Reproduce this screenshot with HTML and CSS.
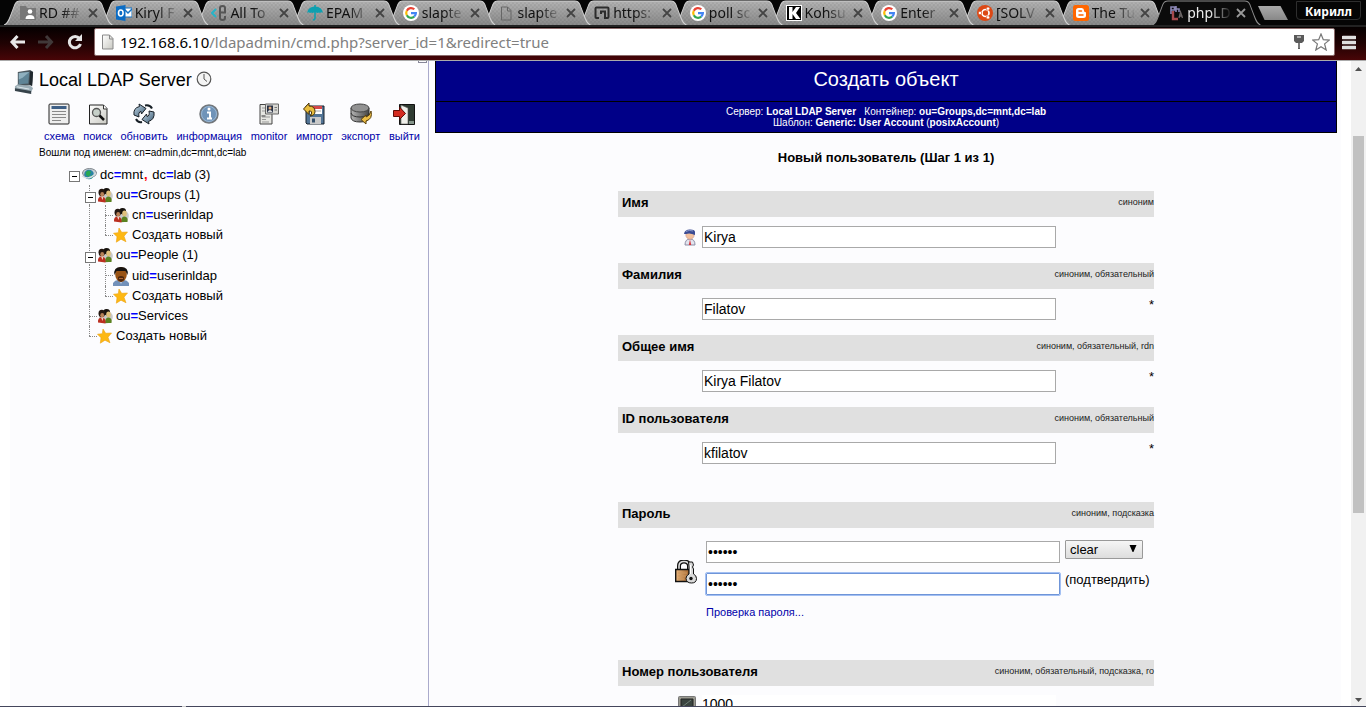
FILE: index.html
```html
<!DOCTYPE html>
<html lang="ru">
<head>
<meta charset="utf-8">
<title>phpLDAPadmin</title>
<link rel="stylesheet" href="styles.css">
</head>
<body>
<svg class="defs" aria-hidden="true">
  <defs>
    <linearGradient id="tabfill" x1="0" y1="0" x2="0" y2="1"><stop offset="0" stop-color="#b4b4b4"/><stop offset="1" stop-color="#8a8a8a"/></linearGradient>
    <linearGradient id="steel" x1="0" y1="0" x2="1" y2="1"><stop offset="0" stop-color="#c8dcea"/><stop offset="1" stop-color="#35556f"/></linearGradient>
    <linearGradient id="paper" x1="0" y1="0" x2="1" y2="1"><stop offset="0" stop-color="#ffffff"/><stop offset="1" stop-color="#c9c9c2"/></linearGradient>
    <linearGradient id="metal" x1="0" y1="0" x2="1" y2="0"><stop offset="0" stop-color="#b5b5b5"/><stop offset="1" stop-color="#444444"/></linearGradient>
    <linearGradient id="brass" x1="0" y1="0" x2="1" y2="0"><stop offset="0" stop-color="#e8b47c"/><stop offset="1" stop-color="#a5672e"/></linearGradient>
    <pattern id="weave" width="4" height="4" patternUnits="userSpaceOnUse"><path d="M0 0h2v2h-2zM2 2h2v2h-2z" fill="#000" opacity=".07"/></pattern>
  </defs>
  <symbol id="shape" viewBox="0 0 109 24" preserveAspectRatio="none">
    <path d="M0 24C4 23 5 19 7 14L11 4Q12.500 1 16 1H93Q96.500 1 98 4L102 14C104 19 105 23 109 24Z" fill="url(#tabfill)"/>
    <path d="M0 24C4 23 5 19 7 14L11 4Q12.500 1 16 1H93Q96.500 1 98 4L102 14C104 19 105 23 109 24Z" fill="url(#weave)"/>
    <path d="M0 24C4 23 5 19 7 14L11 4Q12.500 1 16 1H93Q96.500 1 98 4L102 14C104 19 105 23 109 24" fill="none" stroke="#d0d0d0" stroke-width="1"/>
  </symbol>
  <symbol id="shape-on" viewBox="0 0 109 24" preserveAspectRatio="none">
    <path d="M0 24C4 23 5 19 7 14L11 4Q12.500 1 16 1H93Q96.500 1 98 4L102 14C104 19 105 23 109 24" fill="#0b0b0b" stroke="#8c8c8c"/>
  </symbol>
  <symbol id="x" viewBox="0 0 10 10"><path d="M1 1L9 9M9 1L1 9" stroke="currentColor" stroke-width="1.800"/></symbol>
  <symbol id="g" viewBox="0 0 16 16"><circle cx="8" cy="8" r="8" fill="#fff"/><g fill="none" stroke-width="2.200"><path d="M11.300 4.300A4.800 4.800 0 0 0 3.800 5.700" stroke="#ea4335"/><path d="M3.800 5.700A4.800 4.800 0 0 0 3.800 10.300" stroke="#fbbc05"/><path d="M3.800 10.300A4.800 4.800 0 0 0 11.200 11.700" stroke="#34a853"/><path d="M11.200 11.700A4.800 4.800 0 0 0 12.900 8.100H8" stroke="#4285f4"/></g></symbol>
  <symbol id="group" viewBox="0 0 16 16"><ellipse cx="9" cy="9" rx="6.800" ry="6.500" fill="#c9c9c9"/><path d="M6 6Q5.500 1 9.500 1T13 5L11 8z" fill="#17120e"/><ellipse cx="11.500" cy="6.500" rx="2.300" ry="3" fill="#dfc07c"/><path d="M8 15Q8 9.500 11.500 9.500Q15.500 10 14.500 15Z" fill="#5a8220"/><ellipse cx="4.800" cy="5.500" rx="3.300" ry="3.700" fill="#241812"/><ellipse cx="5.200" cy="7.200" rx="1.900" ry="2.200" fill="#b98257"/><path d="M1 14.500Q.500 9.500 5 9.500Q9 10 8.500 15.500Z" fill="#bb2f20"/><path d="M4 9.500l1.500 3.500 1-3.500" fill="#ecd5c0"/></symbol>
  <symbol id="star" viewBox="0 0 16 16"><path d="M6 1L8.700 5.300 14.500 5 11 9.200 13 14.800 8 12.200 3.300 15.200 4 9.800.500 6.200 5.300 5.700Z" fill="#fdb813" stroke="#eda316" stroke-width=".600"/></symbol>
</svg>

<header class="chrome">
  <div class="tabstrip">
    <nav class="tabs" aria-label="Вкладки">
      <div class="tab"><svg class="tab-shape"><use href="#shape"/></svg><svg class="fav" viewBox="0 0 16 16"><path d="M0 1h6l1 2h9v12H0z" fill="#777"/><circle cx="10" cy="6.500" r="2.300" fill="#fff"/><path d="M5.500 14q0-4 4.500-4t4.500 4z" fill="#fff"/></svg><span class="tab-name">RD ##</span><button class="close" aria-label="Закрыть"><svg><use href="#x"/></svg></button></div>
      <div class="tab"><svg class="tab-shape"><use href="#shape"/></svg><svg class="fav" viewBox="0 0 16 16"><path d="M8 3h8v9H8z" fill="#fff" stroke="#1472c4"/><path d="M8 4l4 4 4-4" fill="none" stroke="#1472c4" stroke-width="1.500"/><path d="M0 1.500L9.500 0v16L0 14.500z" fill="#0b6cc4"/><ellipse cx="4.800" cy="8" rx="2.300" ry="3" fill="none" stroke="#fff" stroke-width="1.600"/></svg><span class="tab-name">Kiryl F</span><button class="close" aria-label="Закрыть"><svg><use href="#x"/></svg></button></div>
      <div class="tab"><svg class="tab-shape"><use href="#shape"/></svg><svg class="fav" viewBox="0 0 16 16"><path d="M5 4L1 8l4 4" fill="none" stroke="#26b4c8" stroke-width="2"/><path d="M9 7.500h5V3q0-2-2.500-2T9 3v10q0 2 2.500 2t2.500-2v-2" fill="none" stroke="#555" stroke-width="2"/></svg><span class="tab-name">All To</span><button class="close" aria-label="Закрыть"><svg><use href="#x"/></svg></button></div>
      <div class="tab"><svg class="tab-shape"><use href="#shape"/></svg><svg class="fav" viewBox="0 0 16 16"><path d="M0 8Q1 1.500 8 1.500T16 8Q14.500 6.500 13 8 12 6.800 10.500 8 8 6.500 5.500 8 4 6.800 3 8 1.500 6.500 0 8z" fill="#0ea0b0"/><path d="M8 0v13q0 2-2.200 1.800" fill="none" stroke="#0ea0b0" stroke-width="1.600"/></svg><span class="tab-name">EPAM</span><button class="close" aria-label="Закрыть"><svg><use href="#x"/></svg></button></div>
      <div class="tab"><svg class="tab-shape"><use href="#shape"/></svg><svg class="fav"><use href="#g"/></svg><span class="tab-name">slapte</span><button class="close" aria-label="Закрыть"><svg><use href="#x"/></svg></button></div>
      <div class="tab"><svg class="tab-shape"><use href="#shape"/></svg><svg class="fav" viewBox="0 0 16 16"><path d="M3.500 2h6l3.500 3.500V15H3.500zM9.500 2v4H13" fill="none" stroke="#666"/></svg><span class="tab-name">slapte</span><button class="close" aria-label="Закрыть"><svg><use href="#x"/></svg></button></div>
      <div class="tab"><svg class="tab-shape"><use href="#shape"/></svg><svg class="fav" viewBox="0 0 16 16"><path d="M5 13H2.500Q1.500 13 1.500 12V3.500q0-1 1-1h11q1 0 1 1V12q0 1-1 1H11V6.500H7V9" fill="none" stroke="#2c2c2c" stroke-width="2"/></svg><span class="tab-name">https:</span><button class="close" aria-label="Закрыть"><svg><use href="#x"/></svg></button></div>
      <div class="tab"><svg class="tab-shape"><use href="#shape"/></svg><svg class="fav"><use href="#g"/></svg><span class="tab-name">poll sc</span><button class="close" aria-label="Закрыть"><svg><use href="#x"/></svg></button></div>
      <div class="tab"><svg class="tab-shape"><use href="#shape"/></svg><svg class="fav" viewBox="0 0 16 16"><path d="M0 0h16v16H0z" fill="#fff"/><path d="M1 1h14v14H1z" fill="#000"/><path d="M3 2h3.500v5L10 2h4l-4 6 4.500 6H10L6.500 9v5H3z" fill="#fff"/></svg><span class="tab-name">Kohsu</span><button class="close" aria-label="Закрыть"><svg><use href="#x"/></svg></button></div>
      <div class="tab"><svg class="tab-shape"><use href="#shape"/></svg><svg class="fav"><use href="#g"/></svg><span class="tab-name">Enter</span><button class="close" aria-label="Закрыть"><svg><use href="#x"/></svg></button></div>
      <div class="tab"><svg class="tab-shape"><use href="#shape"/></svg><svg class="fav" viewBox="0 0 16 16"><circle cx="8" cy="8" r="8" fill="#dd4814"/><circle cx="8.500" cy="8" r="3.500" fill="none" stroke="#fff" stroke-width="1.700"/><g fill="#fff" stroke="#dd4814" stroke-width=".600"><circle cx="3" cy="8" r="1.700"/><circle cx="11" cy="3.600" r="1.700"/><circle cx="11" cy="12.400" r="1.700"/></g></svg><span class="tab-name">[SOLV</span><button class="close" aria-label="Закрыть"><svg><use href="#x"/></svg></button></div>
      <div class="tab"><svg class="tab-shape"><use href="#shape"/></svg><svg class="fav" viewBox="0 0 16 16"><rect width="16" height="16" rx="2.500" fill="#f60"/><path d="M5.500 3h3.200q2.300 0 2.300 2.500 0 1.500 1.200 1.500.8 0 .8 1V10.500Q13 13 10.300 13H5.700Q3 13 3 10.500v-5Q3 3 5.500 3z" fill="#fff"/><path d="M6 6h2.500M6 10h4" stroke="#f60" stroke-width="1.500" stroke-linecap="round"/></svg><span class="tab-name">The Tu</span><button class="close" aria-label="Закрыть"><svg><use href="#x"/></svg></button></div>
      <div class="tab tab-on"><svg class="tab-shape"><use href="#shape-on"/></svg><svg class="fav" viewBox="0 0 16 16"><path d="M3 9V2h3.500v3H3M8 1v6M8 4h3v3" fill="none" stroke="#8b86b5" stroke-width="1.600"/><path d="M5 6v8h5" fill="none" stroke="#a84a4e" stroke-width="2.400"/><path d="M11 13l1.500-6 2 6M11.500 11h3" fill="none" stroke="#6c6666" stroke-width="1.300"/></svg><span class="tab-name">phpLD</span><button class="close" aria-label="Закрыть"><svg><use href="#x"/></svg></button></div>
    </nav>
    <button class="new-tab" aria-label="Новая вкладка"></button>
    <button class="profile">Кирилл</button>
  </div>
  <div class="toolbar">
    <button class="nav-btn" aria-label="Назад"><svg viewBox="0 0 16 16"><path d="M8.500 2L3 8l5.500 6M3 8h13" fill="none" stroke="#e8e8e8" stroke-width="3"/></svg></button>
    <button class="nav-btn" aria-label="Вперёд"><svg viewBox="0 0 16 16"><path d="M8 2l5.500 6L8 14M13 8H0" fill="none" stroke="#403838" stroke-width="3"/></svg></button>
    <button class="nav-btn" aria-label="Обновить"><svg viewBox="0 0 16 16"><path d="M12.500 4.500A5.700 5.700 0 1 0 13.500 10" fill="none" stroke="#e4e4e4" stroke-width="3"/><path d="M15 0v7H8z" fill="#e4e4e4"/></svg></button>
    <div class="omnibox">
      <svg class="page-ico" viewBox="0 0 13 16"><path d="M1.500 1h7L12 4.500V15H1.500z" fill="url(#paper)" stroke="#888"/><path d="M8.500 1v4H12" fill="none" stroke="#888"/></svg>
      <div class="url" role="textbox" aria-label="Адрес"><span class="host">192.168.6.10</span>/ldapadmin/cmd.php?server_id=1&amp;redirect=true</div>
      <button class="omni-btn" aria-label="Пароли"><svg viewBox="0 0 18 18"><path d="M4 2h10v6l-2 2H10v6H8v-6H6L4 8z" fill="#5a5a5a"/><path d="M7 4h4" stroke="#fff"/><path d="M9 10v5" stroke="#999"/></svg></button>
      <button class="omni-btn" aria-label="Закладка"><svg viewBox="0 0 18 18"><path d="M9 1l2.300 5.700 6 .4-4.700 3.800L14.200 17 9 13.700 3.800 17l1.600-6.100L.700 7.100l6-.4z" fill="#fff" stroke="#777" stroke-width="1.200"/></svg></button>
    </div>
    <button class="menu-btn" aria-label="Меню"><svg viewBox="0 0 14 15"><path d="M1 2.500h12M1 7.500h12M1 12.500h12" stroke="#e0e0e0" stroke-width="3.500" stroke-linecap="round"/></svg></button>
  </div>
</header>

<div class="viewport">
  <div class="page">
    <aside class="sidebar">
      <span class="nub"></span>
      <div class="server">
        <svg class="server-ico" viewBox="0 0 22 26"><path d="M4 3l13-2 3 2-1 14-15 1z" fill="#4a565d"/><path d="M5 4l11-1-1 12-10 1z" fill="#5f8496"/><path d="M5 4l11-1-7 6-4 2z" fill="#8fb0bf"/><path d="M17 2l3 1-1 15-3-2z" fill="#20282e"/><path d="M1 18l3-2 14 2 2 2-2 4-17-3z" fill="#9badb6"/><path d="M1 20l17 3v3L1 23z" fill="#36424a"/><path d="M3 18.500l13 2.500" stroke="#dde8ec"/></svg>
        <h1>Local LDAP Server</h1>
        <svg class="clock" viewBox="0 0 16 16"><circle cx="8" cy="8" r="6.800" fill="#f4f4f4" stroke="#555" stroke-width="1.200"/><path d="M8 3v5l3 2.500" fill="none" stroke="#555"/></svg>
      </div>
      <nav class="actions">
        <a href="#"><svg viewBox="0 0 22 22"><rect x="1" y="1" width="20" height="20" rx="1" fill="#eee" stroke="#222"/><path d="M3.500 4.500h15" stroke="#3e5f86" stroke-width="3"/><path d="M4 8.500h14M4 11.500h14M4 14.500h14M4 17.500h9" stroke="#888"/></svg>схема</a>
        <a href="#"><svg viewBox="0 0 22 22"><path d="M2.500 2h14L20 5.500V21H2.500z" fill="url(#paper)" stroke="#222"/><path d="M16.500 2v4H20" fill="#fff" stroke="#333"/><circle cx="9.500" cy="9.500" r="4" fill="#c6d0c8" stroke="#555" stroke-width="1.300"/><path d="M12.500 12.500l4.500 4.500" stroke="#111" stroke-width="2.500"/></svg>поиск</a>
        <a href="#"><svg viewBox="0 0 22 22"><path d="M1 12Q0 5 6.500 3.500L6 1l7 4.500L8.500 11 8 8.500Q5 9 6 14z" fill="url(#steel)" stroke="#171f26"/><path d="M21 9q1 7.500-5.500 9.500L16 21l-7-4.500L13.500 11l.5 2.500Q17 13 16 8z" fill="url(#steel)" stroke="#171f26"/><path d="M12 2.500q5-1 7 3" fill="none" stroke="#171f26" stroke-width="2"/><path d="M3 16q2 4 6 3" fill="none" stroke="#171f26" stroke-width="2"/></svg>обновить</a>
        <a href="#"><svg viewBox="0 0 22 22"><circle cx="11" cy="11" r="9" fill="#6f93b8" stroke="#73777b" stroke-width="1.500"/><circle cx="11" cy="11" r="7.500" fill="none" stroke="#9ab6d1"/><path d="M9 9.500h3v6m-3 0h5" fill="none" stroke="#fff" stroke-width="2"/><circle cx="11" cy="6" r="1.500" fill="#fff"/></svg>информация</a>
        <a href="#"><svg viewBox="0 0 22 22"><path d="M2 1.500h12V21H2z" fill="#e6e6e2" stroke="#444"/><path d="M4 5h4M4 8h4M4 14h8M4 16.500h4M4 19h7" stroke="#999"/><path d="M3.500 12h4v2h-4z" fill="#888"/><path d="M7.500 1h13v10h-13z" fill="#d8d8d4" stroke="#666"/><path d="M9 2.500h6v7H9z" fill="#283044"/><circle cx="12" cy="5" r="1.500" fill="#e1aa7b"/><path d="M9.500 9q2.500-4 5 0z" fill="#ddd"/><path d="M16.500 4.500H19M16.500 7H19" stroke="#777"/></svg>monitor</a>
        <a href="#"><svg viewBox="0 0 22 22"><path d="M3 3h18v18H4l-1-1z" fill="#527496" stroke="#17212b"/><path d="M7 3h12v8H7z" fill="#fff"/><path d="M7 3h12v3H7z" fill="#d4484a"/><path d="M8 8h10" stroke="#aaa"/><path d="M7 14h11v7H7z" fill="#c9c9c9"/><path d="M9 15.500h3v4H9z" fill="#344f6a"/><path d="M.500 6L6 0v3q6 0 6 5.500 0 4-5 4.500 2-2 1.500-4Q8 7.500 6 8v3.500z" fill="#e8bc3c" stroke="#443008"/></svg>импорт</a>
        <a href="#"><svg viewBox="0 0 22 22"><path d="M1 5v10q1 4 9 4t9-4V5z" fill="url(#metal)" stroke="#333"/><path d="M1 10q1 4 9 4t9-4" fill="none" stroke="#333"/><ellipse cx="10" cy="5" rx="9" ry="4" fill="#929292" stroke="#444"/><path d="M21 8q2 8-5 10v3L11 16.500 16 12v2q4-1 5-6z" fill="#ebbc46" stroke="#5c430d"/></svg>экспорт</a>
        <a href="#"><svg viewBox="0 0 22 22"><path d="M6.500 1.500H21.500V21.500H6.500z" fill="#2f3b32" stroke="#111"/><path d="M8 2l7 3v16H8z" fill="#f0f0ea" stroke="#555" stroke-width=".600"/><path d="M16 18h5v3h-5z" fill="#84948a"/><path d="M.500 7.500h6V4L12.500 10.500l-6 6V13.500h-6z" fill="#d32b20" stroke="#5e0d08"/></svg>выйти</a>
      </nav>
      <p class="logged">Вошли под именем: cn=admin,dc=mnt,dc=lab</p>
      <ul class="tree">
        <li class="tall"><button class="cell minus" aria-label="Свернуть"></button><svg viewBox="0 0 16 16"><ellipse cx="8.500" cy="6" rx="7" ry="4.500" fill="#c6ccd2" stroke="#81898f"/><circle cx="8" cy="7.500" r="4.800" fill="#2a83a5"/><path d="M5 5q3-3 5 0l-2 5-3-2zM10 8l2 1-2 3z" fill="#27a852"/><path d="M1 9q7 5 14-3" fill="none" stroke="#d7dde1" stroke-width="1.500"/></svg><a href="#">dc<b>=</b>mnt<i>,</i> dc<b>=</b>lab (3)</a></li>
        <li><span class="cell"></span><button class="cell minus line" aria-label="Свернуть"></button><svg><use href="#group"/></svg><a href="#">ou<b>=</b>Groups (1)</a></li>
        <li><span class="cell"></span><span class="cell line"></span><span class="cell line tee"></span><svg><use href="#group"/></svg><a href="#">cn<b>=</b>userinldap</a></li>
        <li><span class="cell"></span><span class="cell line"></span><span class="cell half tee"></span><svg><use href="#star"/></svg><a href="#">Создать новый</a></li>
        <li><span class="cell"></span><button class="cell minus line" aria-label="Свернуть"></button><svg><use href="#group"/></svg><a href="#">ou<b>=</b>People (1)</a></li>
        <li class="tall"><span class="cell"></span><span class="cell line"></span><span class="cell line tee"></span><svg class="person" viewBox="0 0 16 20"><path d="M0 20v-3q2-3 5-3h6q3 0 5 3v3z" fill="#7291ba"/><path d="M5 13h6l-3 5z" fill="#b9c8dd"/><ellipse cx="8" cy="8.500" rx="5.800" ry="7.500" fill="#995314"/><path d="M1.500 9Q0 1 8 1t6.500 8L12.500 5h-9z" fill="#171310"/><path d="M5 11q3-2 6 0v3l-3 2-3-2z" fill="#50290e"/><path d="M6 12.500h4" stroke="#ad6635"/></svg><a href="#">uid<b>=</b>userinldap</a></li>
        <li><span class="cell"></span><span class="cell line"></span><span class="cell half tee"></span><svg><use href="#star"/></svg><a href="#">Создать новый</a></li>
        <li><span class="cell"></span><span class="cell line tee"></span><svg><use href="#group"/></svg><a href="#">ou<b>=</b>Services</a></li>
        <li><span class="cell"></span><span class="cell half tee"></span><svg><use href="#star"/></svg><a href="#">Создать новый</a></li>
      </ul>
    </aside>

    <main class="main">
      <div class="banner">
        <h2>Создать объект</h2>
        <p>Сервер: <b>Local LDAP Server</b> &nbsp; Контейнер: <b>ou=Groups,dc=mnt,dc=lab</b><br>Шаблон: <b>Generic: User Account</b> (<b>posixAccount</b>)</p>
      </div>
      <h3>Новый пользователь (Шаг 1 из 1)</h3>
      <form class="form">
        <section class="field">
          <div class="bar"><label for="given">Имя</label><small>синоним</small></div>
          <div class="row"><svg class="ico-user" viewBox="0 0 12 17"><path d="M1 16q0-6 5-6t5 6z" fill="#e2e4ee" stroke="#8d8ea6"/><path d="M6 10.500l1.200 5.500H4.800z" fill="#d8343c"/><circle cx="6" cy="6" r="4.200" fill="#f2c09c" stroke="#b88" stroke-width=".500"/><path d="M0 5Q.500.500 6 .500T11 3.500V6Q6 3.500 2 5z" fill="#3a4a92"/><path d="M2 2.500q3-2 7-.5" fill="none" stroke="#8998c9"/></svg><input id="given" class="text" type="text" value="Kirya"></div>
        </section>
        <section class="field">
          <div class="bar"><label for="sn">Фамилия</label><small>синоним, обязательный</small></div>
          <div class="row"><input id="sn" class="text" type="text" value="Filatov"><span class="req">*</span></div>
        </section>
        <section class="field">
          <div class="bar"><label for="cn">Общее имя</label><small>синоним, обязательный, rdn</small></div>
          <div class="row"><input id="cn" class="text" type="text" value="Kirya Filatov"><span class="req">*</span></div>
        </section>
        <section class="field spaced">
          <div class="bar"><label for="uid">ID пользователя</label><small>синоним, обязательный</small></div>
          <div class="row"><input id="uid" class="text" type="text" value="kfilatov"><span class="req">*</span></div>
        </section>
        <section class="field">
          <div class="bar"><label for="pw">Пароль</label><small>синоним, подсказка</small></div>
          <div class="secret">
            <svg class="ico-lock" viewBox="0 0 22 24"><path d="M4 10V6q0-4.500 5-4.500T14 6v4" fill="none" stroke="#111" stroke-width="4"/><path d="M4 10V6q0-4.500 5-4.500T14 6v4" fill="none" stroke="#ddd" stroke-width="1.600"/><path d="M.700 9.500h13.600v12H.700z" fill="url(#brass)" stroke="#111" stroke-width="1.400"/><path d="M3 13h9M3 16h9M3 19h6" stroke="#cb955e"/><path d="M13.500 2h4l1 3-1 2 1 2v5q3 1.500 3 4.500 0 4.500-5 4.500T11 18.500q0-3 3-4.500V7z" fill="#dadada" stroke="#111"/><circle cx="16" cy="18.500" r="1.700" fill="#111"/><path d="M15.500 5v9" stroke="#fff"/></svg>
            <div class="pair">
              <input id="pw" class="text" type="password" value="secret">
              <span class="pick"><select aria-label="Шифрование"><option>clear</option></select><svg viewBox="0 0 8 8"><path d="M0 0h8L4.500 8h-1z"/></svg></span>
              <input id="pw2" class="text focused" type="password" value="secret">
              <label class="confirm" for="pw2">(подтвердить)</label>
              <a class="check" href="#">Проверка пароля...</a>
            </div>
          </div>
        </section>
        <section class="field">
          <div class="bar"><label for="num">Номер пользователя</label><small>синоним, обязательный, подсказка, ro</small></div>
          <div class="row"><svg class="ico-term" viewBox="0 0 18 18"><rect x=".500" y=".500" width="17" height="17" rx="1" fill="#9b9b91" stroke="#777"/><path d="M3 3h12v10H3z" fill="#3a443f" stroke="#222"/><path d="M4 11l9-7" stroke="#6f7f76"/></svg><input id="num" class="text plain" type="text" value="1000" readonly></div>
        </section>
      </form>
    </main>
  </div>
  <div class="scrollbar" aria-hidden="true"><svg viewBox="0 0 7 4"><path d="M0 4L3.500 0 7 4z"/></svg><span class="track"><span class="thumb"></span></span><svg viewBox="0 0 7 4"><path d="M0 0h7L3.500 4z"/></svg></div>
</div>
<footer class="edge"></footer>
</body>
</html>
```
FILE: styles.css
```css
* { box-sizing: border-box; }
body {
  margin: 0;
  height: 100vh;
  overflow: hidden;
  display: flex;
  flex-direction: column;
  background: #fff;
  color: #000;
  font: 13px/20px "Liberation Sans", Arial, sans-serif;
}
h1, h2, h3, p, ul { margin: 0; padding: 0; font-weight: normal; }
button { border: 0; padding: 0; background: none; color: inherit; font: inherit; }
svg { display: block; flex: none; }
a { text-decoration: none; }
.defs { position: absolute; width: 0; height: 0; }

/* browser frame */
.chrome { flex: none; border-bottom: 1px solid #aaa; background: #000; }
.tabstrip { display: flex; height: 25px; padding: 0 5px 0 4px; background: #050505; }
.tabs { display: flex; flex: 1; min-width: 0; }
.tab {
  position: relative;
  display: flex;
  flex: 1 1 0;
  align-items: center;
  min-width: 0;
  height: 25px;
  padding: 1px 0 0 16px;
  color: #111;
}
.tab-shape { position: absolute; left: 0; top: 0; width: calc(100% + 13px); height: 25px; }
.tab:nth-child(1) { z-index: 12; }
.tab:nth-child(2) { z-index: 11; }
.tab:nth-child(3) { z-index: 10; }
.tab:nth-child(4) { z-index: 9; }
.tab:nth-child(5) { z-index: 8; }
.tab:nth-child(6) { z-index: 7; }
.tab:nth-child(7) { z-index: 6; }
.tab:nth-child(8) { z-index: 5; }
.tab:nth-child(9) { z-index: 4; }
.tab:nth-child(10) { z-index: 3; }
.tab:nth-child(11) { z-index: 2; }
.tab:nth-child(12) { z-index: 1; }
.tab.tab-on { z-index: 13; color: #eee; }
.fav { position: relative; width: 16px; height: 16px; }
.tab-name {
  position: relative;
  flex: 1;
  min-width: 0;
  margin-left: 3px;
  white-space: nowrap;
  font: 14px/20px "Noto Sans", sans-serif;
  -webkit-mask-image: linear-gradient(to right, #000 50%, transparent);
  mask-image: linear-gradient(to right, #000 50%, transparent);
}
.close { position: relative; width: 10px; height: 10px; margin: 0 2px 0 4px; color: #444; }
.tab-on .close { color: #999; }
.close svg { width: 10px; height: 10px; }
.new-tab {
  width: 30px;
  height: 14px;
  margin: 6px 8px 0 10px;
  background: linear-gradient(#aaa, #888);
  clip-path: polygon(0 0, 75% 0, 100% 100%, 22% 100%);
}
.profile {
  width: 65px;
  height: 19px;
  margin-top: 1px;
  border: 1px solid #2e2e2e;
  border-radius: 0 0 4px 4px;
  color: #fff;
  font: bold 12px/20px "Noto Sans", sans-serif;
}
.toolbar {
  display: flex;
  align-items: center;
  gap: 11px;
  height: 35px;
  padding: 0 10px 3px 8px;
  border-top: 2px solid #222;
  background: linear-gradient(#050000, #200203 50%, #480507);
}
.nav-btn svg { width: 18px; height: 16px; }
.omnibox {
  display: flex;
  flex: 1;
  align-items: center;
  height: 28px;
  min-width: 0;
  margin-left: -1px;
  padding: 0 4px 0 6px;
  border: 1px solid #8b6b6b;
  border-radius: 2px;
  background: #fff;
}
.page-ico { width: 13px; height: 16px; }
.url {
  flex: 1;
  min-width: 0;
  margin-left: 6px;
  overflow: hidden;
  white-space: nowrap;
  color: #808080;
  font: 15px/24px "Noto Sans", sans-serif;
}
.host { color: #000; }
.omni-btn { margin-left: 4px; }
.omni-btn svg { width: 18px; height: 18px; }
.menu-btn { margin-left: -4px; }
.menu-btn svg { width: 14px; height: 15px; }

/* page */
.viewport { display: flex; flex: 1; min-height: 0; }
.page { display: flex; flex: 1; min-width: 0; overflow: hidden; margin: 0 10px; background: #fcfcfe; }
.sidebar { position: relative; flex: none; width: 419px; border-right: 1px solid #aac; }
.nub { position: absolute; right: 1px; top: 0; width: 9px; height: 2px; border: solid #889; border-width: 0 1px 1px; }
.server { display: flex; align-items: flex-start; padding: 8px 0 0 4px; }
.server-ico { width: 21px; height: 25px; }
.server h1 { margin-left: 4px; font-size: 18px; line-height: 22px; }
.clock { width: 16px; height: 16px; margin: 2px 0 0 4px; }
.actions { display: flex; justify-content: space-between; padding: 9px 8px 0 34px; }
.actions a {
  display: flex;
  flex-direction: column;
  align-items: center;
  color: #00a;
  font-size: 11px;
  line-height: 16px;
}
.actions svg { width: 22px; height: 22px; margin-bottom: 3px; }
.logged { padding: 1px 0 0 29px; font-size: 10px; line-height: 16px; }
.tree { padding: 3px 0 0 55px; list-style: none; }
.tree li { display: flex; align-items: center; height: 20px; }
.tree li.tall { height: 21px; }
.tree li > svg { width: 16px; height: 16px; }
.tree li > .person { height: 20px; }
.tree a { margin-left: 3px; color: #000; }
.tree b { color: #00f; }
.tree i { padding: 0 1px; color: #f00; font-style: normal; font-weight: bold; }
.cell { position: relative; width: 16px; height: 100%; }
.line::before, .half::before { content: ""; position: absolute; left: 8px; top: 0; height: 100%; border-left: 1px dotted #888; }
.half::before { height: 50%; }
.tee::after, .minus::after { content: ""; position: absolute; left: 8px; top: 10px; width: 8px; border-top: 1px dotted #888; }
.minus::after {
  left: 4px;
  top: 7px;
  width: 9px;
  height: 9px;
  border: 1px solid #777;
  background: linear-gradient(#000, #000) center / 5px 1px no-repeat #fff;
}

.main { flex: 1; min-width: 0; margin-left: 2px; padding: 0 4px; }
.banner { border: solid #000; border-width: 0 1px 1px; background: #008; color: #fff; text-align: center; }
.banner h2 { padding: 6px 0 10px; border-bottom: 1px solid #000; font-size: 20px; line-height: 24px; }
.banner p { padding: 4px 0; font-size: 10px; line-height: 11px; }
.main h3 { padding: 15px 0 23px; font-size: 13px; font-weight: bold; text-align: center; }
.form { width: 536px; margin: 0 auto; }
.bar { display: flex; justify-content: space-between; height: 26px; padding-left: 4px; background: #e0e0e0; }
.bar label { font-weight: bold; line-height: 24px; }
.bar small { color: #222; font-size: 9px; line-height: 22px; }
.row { display: grid; grid-template-columns: 78px 354px 1fr; column-gap: 6px; height: 46px; padding-top: 9px; }
.row > svg { grid-row: 1; justify-self: end; }
.row .text { grid-column: 2; grid-row: 1; }
.spaced .row { height: 69px; }
.text {
  width: 354px;
  height: 22px;
  padding: 0 1px;
  border: 1px solid #a9a9a9;
  background: #fff;
  color: #000;
  font: 14px/20px "Liberation Sans", Arial, sans-serif;
}
.text.focused { border-color: #6f95d8; outline: 1px solid #a3c0f3; border-radius: 1px; }
.text.plain { height: 18px; padding: 0; border: 0; line-height: 18px; }
.req { grid-column: 3; grid-row: 1; text-align: right; line-height: 14px; }
.ico-user { width: 12px; height: 17px; margin-top: 3px; }
.ico-term { width: 18px; height: 18px; margin-top: 1px; }
.secret { display: flex; height: 132px; padding: 13px 0 0 57px; }
.ico-lock { width: 22px; height: 24px; margin-top: 19px; }
.pair { display: grid; grid-template-columns: 354px auto; grid-template-rows: 22px 22px 20px; gap: 10px 5px; margin-left: 9px; align-content: start; }
.pick { position: relative; width: 78px; height: 19px; margin-top: -1px; }
.pick select {
  display: block;
  width: 78px;
  height: 19px;
  padding: 0 4px;
  border: 1px solid #999;
  border-radius: 1px;
  background: linear-gradient(#f6f6f6, #ddd);
  color: #000;
  font: 13px/17px "Liberation Sans", Arial, sans-serif;
  appearance: none;
}
.pick svg { position: absolute; right: 6px; top: 5px; width: 8px; height: 7px; pointer-events: none; }
.confirm { line-height: 14px; }
.check { color: #00a; font-size: 11px; line-height: 14px; }

.scrollbar { display: flex; flex: none; flex-direction: column; align-items: center; width: 15px; padding: 6px 0 4px; background: #f1f1f1; fill: #505050; }
.scrollbar svg { width: 7px; height: 4px; }
.track { flex: 1; width: 11px; padding-top: 65px; }
.thumb { display: block; height: 67%; background: #c1c1c1; }
.edge { flex: none; height: 1px; background: linear-gradient(#ccc, #ccc) 182px 0 / 4px 1px no-repeat #44465c; }
```
